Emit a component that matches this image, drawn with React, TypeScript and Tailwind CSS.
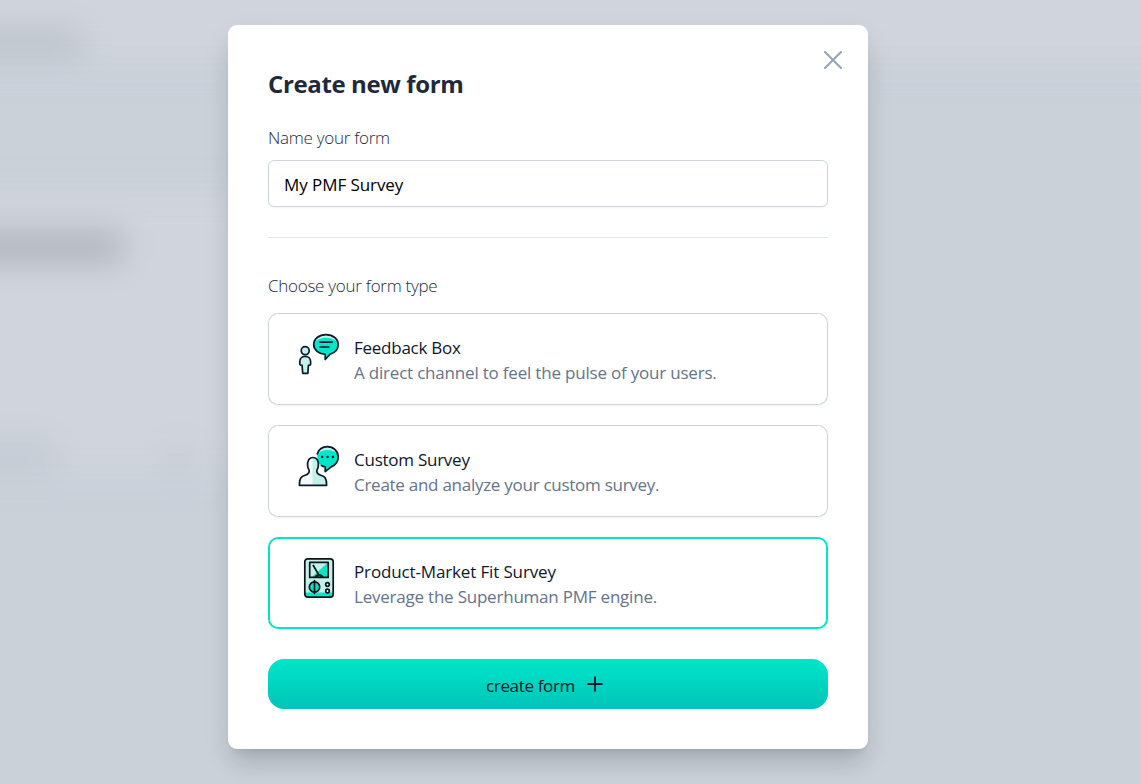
import { useState, type ReactNode } from "react";

const INK = "#0f172a";

function FeedbackIcon() {
  return (
    <svg width="42" height="42" viewBox="-0.5 0 42 42" fill="none" stroke={INK} strokeWidth="1.7" strokeLinejoin="round" strokeLinecap="round">
      <path d="M27.500 1.700c7 0 12.200 4.200 12.200 9.900 0 4.600-3.200 8.200-8 9.500L26.700 26.500v-5.100c-6.400-.4-11.500-4.400-11.500-9.800C15.200 5.900 20.400 1.700 27.500 1.700z" fill="#00e6ca" stroke="none" />
      <path d="M15.500 10.500C16.500 5.200 21.500 2 27.500 2s11 3.200 12 8.500C37.500 7 33 4.800 27.500 4.800s-10 2.200-12 5.700z" fill="#c4f0eb" stroke="none" />
      <path d="M27.500 1.700c7 0 12.200 4.200 12.200 9.900 0 4.600-3.200 8.200-8 9.500L26.700 26.500v-5.100c-6.400-.4-11.500-4.400-11.500-9.800C15.200 5.900 20.400 1.700 27.500 1.700z" />
      <path d="M21.300 9.100h12.300M21.300 14h9" />
      <circle cx="6.700" cy="17.700" r="4" fill="#c4f0eb" />
      <path d="M1.300 31v-2.500c0-3 2.200-5.200 5.400-5.200s5.400 2.200 5.400 5.200V31c0 1-1 1.400-2.200 1.400L9.400 40.300H4.200l-.6-7.900C2.300 32.400 1.300 32 1.300 31z" fill="#c4f0eb" />
    </svg>
  );
}

function CustomIcon() {
  return (
    <svg width="42" height="42" viewBox="-0.5 0 42 42" fill="none" stroke={INK} strokeWidth="1.700" strokeLinejoin="round" strokeLinecap="round">
      <path d="M18.500 9.500C19.500 4.700 24 1.700 28.800 1.700c6.200 0 10.900 4.500 10.900 10.300 0 4.400-2.700 7.900-6.600 9.600L26.700 26.500v-4.700c-3-.5-5.500-2-7-4.800z" fill="#00e6ca" stroke="none" />
      <path d="M19.500 9.500C20.500 5.200 24.500 2.200 29 2.200s9 2.800 10.300 7.300C37.500 6.700 33.700 5 29 5s-8 1.700-9.500 4.500z" fill="#c4f0eb" stroke="none" />
      <path d="M18.800 8.800C20.200 4.700 24 1.700 28.800 1.700c6.200 0 10.900 4.500 10.900 10.300 0 4.400-2.700 7.900-6.600 9.600L26.700 26.500v-4.700c-1.400-.2-2.700-.6-3.800-1.300" />
      <path d="M23.500 12h.2M29 12h.2M34.300 12h.2" strokeWidth="2.300" />
      <path d="M9.200 21.500c-.6-5.500 1.300-9 5.300-9s5.900 3.500 5.300 9c-.2 1.800-1.500 3-1.500 4.500 0 2.100 1.500 3.400 4 4.200 4.100 1.300 5.800 3 5.800 10.100H.9c0-7.100 1.700-8.800 5.800-10.100 2.500-.8 4-2.100 4-4.200 0-1.500-1.300-2.700-1.500-4.500z" fill="#c4f0eb" stroke="none" />
      <path d="M14 12.500c-3.600 0-5.300 3.500-4.800 9 .2 1.800 1.500 3 1.500 4.500 0 2.100-1.500 3.400-4 4.200C2.600 31.500.9 33.200.9 40.300H14z" fill="#f0fbfa" stroke="none" />
      <path d="M9.200 21.500c-.6-5.500 1.300-9 5.300-9s5.900 3.500 5.300 9c-.2 1.800-1.500 3-1.500 4.500 0 2.100 1.500 3.400 4 4.200 4.100 1.300 5.800 3 5.800 10.100H.9c0-7.100 1.700-8.800 5.800-10.100 2.500-.8 4-2.100 4-4.200 0-1.500-1.300-2.700-1.500-4.500z" />
    </svg>
  );
}

function MeterIcon() {
  return (
    <svg width="42" height="42" viewBox="-0.5 0 42 42" fill="none" stroke="#0a1414" strokeWidth="1.700" strokeLinejoin="round" strokeLinecap="round">
      <rect x="6.300" y="1.800" width="28.400" height="38.400" rx="3" fill="#c4f0eb" stroke="none" />
      <path d="M6.300 35.500h28.400v1.700a3 3 0 0 1-3 3H9.300a3 3 0 0 1-3-3z" fill="#00e6ca" stroke="none" />
      <rect x="6.300" y="1.800" width="28.400" height="38.400" rx="3" />
      <path d="M29.700 5.300v14.900H13.200z" fill="#00e6ca" stroke="none" />
      <rect x="11.200" y="5.400" width="18.500" height="15" />
      <path d="M14.800 8.500l5.400 9.200" />
      <path d="M16.700 20.200a4 3.500 0 0 1 7.600 0z" fill="#00e6ca" />
      <circle cx="16" cy="30" r="5.200" fill="#00e6ca" />
      <path d="M16 23.600v12.800" />
      <circle cx="29" cy="27.500" r="1.800" fill="#fff" />
      <circle cx="29" cy="34" r="1.800" fill="#fff" />
    </svg>
  );
}

type FormType = {
  id: string;
  icon: ReactNode;
  title: string;
  text: string;
  titleClass: string;
  textClass: string;
};

const FORM_TYPES: FormType[] = [
  {
    id: "feedback",
    icon: <FeedbackIcon />,
    title: "Feedback Box",
    text: "A direct channel to feel the pulse of your users.",
    titleClass: "tracking-[-0.25px]",
    textClass: "tracking-[-0.2px]",
  },
  {
    id: "custom",
    icon: <CustomIcon />,
    title: "Custom Survey",
    text: "Create and analyze your custom survey.",
    titleClass: "tracking-[-0.25px]",
    textClass: "tracking-[-0.27px]",
  },
  {
    id: "pmf",
    icon: <MeterIcon />,
    title: "Product-Market Fit Survey",
    text: "Leverage the Superhuman PMF engine.",
    titleClass: "tracking-[-0.14px]",
    textClass: "tracking-[-0.22px]",
  },
];

function Backdrop() {
  return (
    <div className="absolute inset-0 overflow-hidden bg-[#cad1d9]" aria-hidden="true">
      <div className="-m-10 flex flex-col items-start blur-[16px]">
        <div className="flex h-[103px] w-[1221px] items-end bg-[#d0d4dc] pb-2">
          <div className="h-6 w-[122px] bg-[#b9bfc7]" />
        </div>
        <div className="mt-[127px] flex h-[282px] w-[300px] flex-col justify-between bg-[#d0d4dc] pt-[42px]">
          <div className="h-[30px] w-[162px] bg-[#adb2bc]" />
          <div className="flex justify-between pr-[72px]">
            <div className="h-8 w-[95px] bg-[#c4cbd3]" />
            <div className="h-8 w-5 bg-[#c5cbd3]" />
          </div>
        </div>
      </div>
    </div>
  );
}

export default function App() {
  const [selected, setSelected] = useState("pmf");
  const [name, setName] = useState("My PMF Survey");

  return (
    <div className="relative h-[784px] w-[1141px] overflow-hidden font-['Open_Sans',sans-serif]">
      <Backdrop />
      <div className="relative pt-[25px] pl-[228px]">
        <div className="relative flex h-[724px] w-[640px] flex-col rounded-[9px] bg-white px-10 pt-[41px] shadow-[0_20px_25px_-5px_rgba(0,0,0,0.1),0_10px_30px_0_rgba(0,0,0,0.07),0_8px_10px_-6px_rgba(0,0,0,0.1)]">
          <button className="absolute top-[26px] right-[26px] text-[#94a3b8]" aria-label="Close">
            <svg width="18" height="18" viewBox="0 0 18 18" stroke="currentColor" strokeWidth="2" strokeLinecap="round">
              <path d="M1 1l16 16M17 1L1 17" />
            </svg>
          </button>
          <h2 className="h-9 text-2xl leading-9 font-bold whitespace-nowrap text-[#1e293b]">
            <span className="tracking-[-0.37px]">Create new form</span>
          </h2>
          <label className="mt-[22px] h-7 text-[17px] leading-7 font-light text-[#1e293b]">
            <span className="tracking-[-0.27px]">Name your form</span>
          </label>
          <input
            className="mt-2 h-[47px] w-full shrink-0 rounded-md border border-[#cbd5e1] px-[15px] pt-0.5 text-[17px] tracking-[-0.07px] text-black shadow-xs outline-none"
            value={name}
            onChange={(e) => setName(e.target.value)}
          />
          <div className="mt-[30px] h-px shrink-0 bg-[#e2e8f0]" />
          <div className="mt-[34px] h-7 text-[17px] leading-7 font-light text-[#1e293b]">
            <span className="tracking-[-0.27px]">Choose your form type</span>
          </div>
          <div className="mt-[13px] flex flex-col gap-5">
            {FORM_TYPES.map((t) => (
              <button
                key={t.id}
                onClick={() => setSelected(t.id)}
                className={
                  "flex h-[92px] items-start rounded-[10px] pt-5 pl-[30px] text-left shadow-xs " +
                  (t.id === selected
                    ? "inset-ring-2 inset-ring-[#00e6ca]"
                    : "inset-ring inset-ring-[#cbd5e1]")
                }
              >
                {t.icon}
                <span className="mt-0.5 ml-[14px] flex flex-col text-[17px] leading-[25px] whitespace-nowrap">
                  <span className="text-[#0f172a]">
                    <span className={t.titleClass}>{t.title}</span>
                  </span>
                  <span className="text-[#64748b]">
                    <span className={t.textClass}>{t.text}</span>
                  </span>
                </span>
              </button>
            ))}
          </div>
          <button className="mt-[30px] flex h-[50px] shrink-0 items-center rounded-2xl bg-linear-to-b from-[#00e6ca] to-[#00c4b8] pl-[218px] text-[17px] text-[#0f172a]">
            <span className="w-[101px] pt-[3px] text-left whitespace-nowrap">
              <span className="tracking-[-0.35px]">create form</span>
            </span>
            <svg width="16" height="16" viewBox="0 0 16 16" stroke="currentColor" strokeWidth="1.800">
              <path d="M8 .5v15M.5 8h15" />
            </svg>
          </button>
        </div>
      </div>
    </div>
  );
}
